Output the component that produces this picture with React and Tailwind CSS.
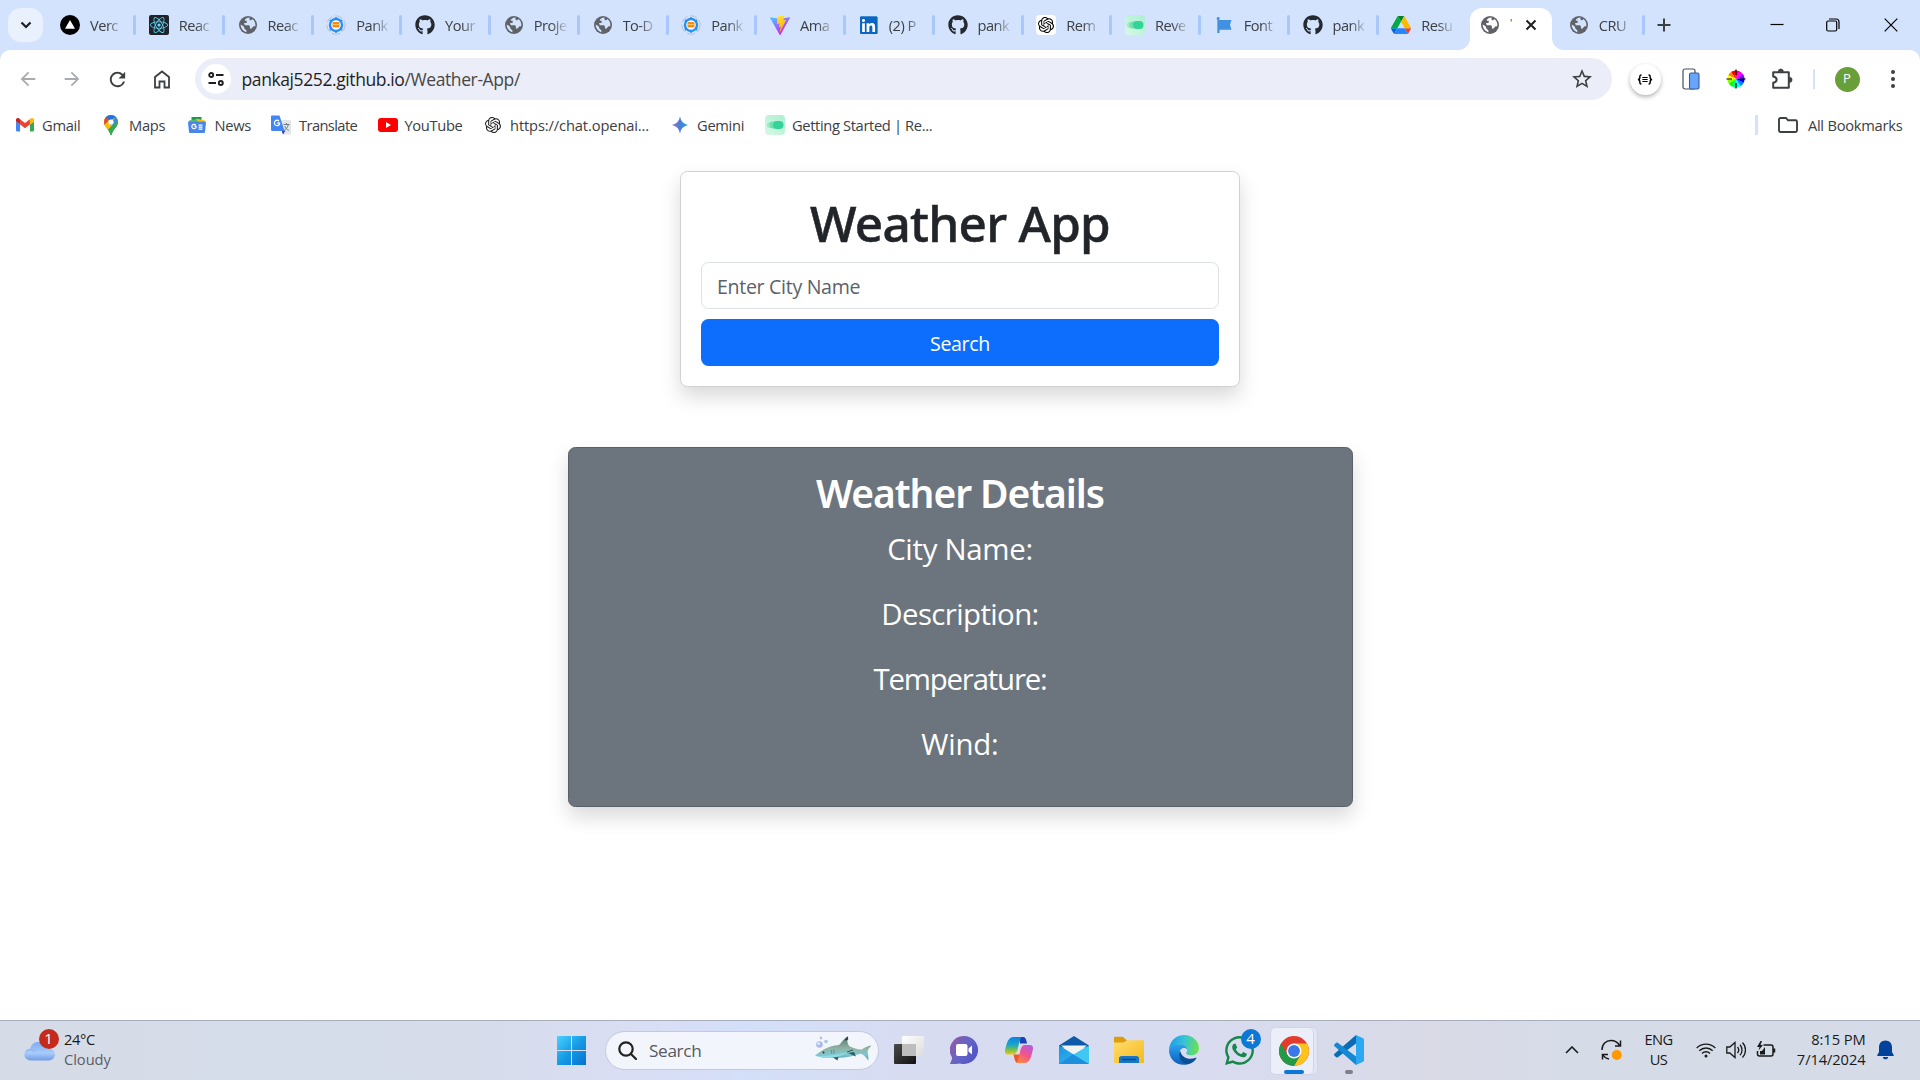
import { FaGithub, FaLinkedin, FaWhatsapp, FaReact } from "react-icons/fa";
import { SiOpenai } from "react-icons/si";
import { MdArrowBack, MdArrowForward, MdRefresh, MdStarOutline } from "react-icons/md";

/* ---------- favicons ---------- */

const Globe = ({ hole = "#d3e3fd" }) => (
  <svg viewBox="0 0 20 20" className="size-5">
    <circle cx="10" cy="10" r="9" fill="#5f6368" />
    <path fill={hole} d="M11.2 2.6c-1.8 0-3 .9-4.2 1.9-.6.6-.2 1.3.5 1.3h1.2v1.4c0 .6-.5.9-1 .9H6.6c-.5 0-.6.5-.4.9l.7 1.3h3.4c1 0 1.6.7 1.6 1.5v1.1c0 .5.4.8.9.8.8 0 1.3-.6 1.6-1.2.3-.7.9-1.3 1.7-1.3h1.2c.4-2.6-.6-5.2-2.5-6.9-1 .1-1.5.9-2 .9-.9 0-1.3-.7-1.3-1.3 0-.5.2-.9-.3-1.3zM2.7 9.6c-.1 3.6 2.3 6.8 5.7 7.6v-1.5c0-.7-.5-1.1-1-1.3-.8-.4-1.3-.9-1.3-1.8 0-.6-.2-1-.6-1.4z" />
  </svg>
);

const Vercel = () => (
  <svg viewBox="0 0 20 20" className="size-5">
    <circle cx="10" cy="10" r="10" fill="#000" />
    <path d="M10 5l5 8.800H5z" fill="#fff" />
  </svg>
);

const ReactTile = () => (
  <span className="flex size-5 items-center justify-center rounded-xs bg-[#20232a]">
    <FaReact className="size-[18px] text-[#61dafb]" />
  </span>
);

const Gear = () => (
  <svg viewBox="0 0 20 20" className="size-5">
    <circle cx="10" cy="10" r="9.200" fill="none" stroke="#b9bfd6" strokeWidth="1" strokeDasharray="8 2.500" />
    <circle cx="10" cy="10" r="6" fill="#fff" stroke="#2490f5" strokeWidth="2.400" />
    <path d="M10 2.300v2M10 15.700v2M4 5l1.300 1.300M14.700 13.700L16 15M4 15l1.300-1.300M14.700 6.300L16 5" stroke="#2490f5" strokeWidth="1.800" />
    <rect x="6.500" y="7" width="7" height="5.500" rx="1" fill="#f08c1d" />
    <path d="M7 9.500h6" stroke="#ffc04d" strokeWidth="1" />
  </svg>
);

const Vite = () => (
  <svg viewBox="0 0 256 257" className="size-5">
    <defs>
      <linearGradient id="viteA" x1="0" x2=".58" y1="0" y2=".8">
        <stop stopColor="#41d1ff" />
        <stop offset="1" stopColor="#bd34fe" />
      </linearGradient>
      <linearGradient id="viteB" x1=".4" x2=".5" y1="0" y2="1">
        <stop stopColor="#ffea83" />
        <stop offset=".1" stopColor="#ffdd35" />
        <stop offset="1" stopColor="#ffa800" />
      </linearGradient>
    </defs>
    <path fill="url(#viteA)" d="M255.153 37.938L134.897 252.976c-2.483 4.440-8.862 4.466-11.382.048L.875 37.958c-2.746-4.814 1.371-10.646 6.827-9.670l120.385 21.517a6.537 6.537 0 0 0 2.322-.004l117.867-21.483c5.438-.991 9.574 4.796 6.877 9.620Z" />
    <path fill="url(#viteB)" d="M185.432.063L96.440 17.501a3.268 3.268 0 0 0-2.634 3.014l-5.474 92.456a3.268 3.268 0 0 0 3.997 3.378l24.777-5.718c2.318-.535 4.413 1.507 3.936 3.838l-7.361 36.047c-.495 2.426 1.782 4.500 4.151 3.780l15.304-4.649c2.372-.720 4.652 1.360 4.150 3.788l-11.698 56.621c-.732 3.542 3.979 5.473 5.943 2.437l1.313-2.028l72.516-144.720c1.215-2.423-.880-5.186-3.540-4.672l-25.505 4.922c-2.396.462-4.435-1.770-3.759-4.114l16.646-57.705c.677-2.350-1.370-4.583-3.769-4.113Z" />
  </svg>
);

const Github = () => <FaGithub className="size-5 text-[#24292f]" />;
const Linkedin = () => (
  <span className="flex size-5 items-center justify-center">
    <span className="flex size-[18px] items-center justify-center overflow-hidden rounded-[1px] bg-white">
      <FaLinkedin className="size-[21px] shrink-0 text-[#0a66c2]" />
    </span>
  </span>
);
const OpenAiTile = () => (
  <span className="flex size-5 items-center justify-center rounded bg-white">
    <SiOpenai className="size-4 text-black" />
  </span>
);
const Toggle = () => (
  <svg viewBox="0 0 20 20" className="size-5">
    <defs>
      <linearGradient id="mint" x1="0" x2="1" y1="1" y2="0">
        <stop stopColor="#d9f8e8" />
        <stop offset="1" stopColor="#a9f0cd" />
      </linearGradient>
    </defs>
    <rect width="20" height="20" rx="4" fill="url(#mint)" />
    <rect x="2" y="7" width="12" height="6" rx="3" fill="#9aebc6" />
    <rect x="4.500" y="6.500" width="11" height="7" rx="3.500" fill="#6fe0ad" />
    <rect x="8" y="6" width="10.500" height="8" rx="4" fill="#34d399" />
  </svg>
);
const Flag = () => (
  <svg viewBox="0 0 20 20" className="size-5">
    <path d="M4.500 5H17.500L16 9.800l1.500 5H5.500V18H4V5z" fill="#4191e3" />
    <path d="M4.200 4v14" stroke="#4191e3" strokeWidth="1.800" />
    <circle cx="4.200" cy="3.300" r="1.400" fill="#4191e3" />
  </svg>
);
const Drive = () => (
  <svg viewBox="0 0 87.300 78" className="size-5">
    <path fill="#0066da" d="m6.600 66.850 3.850 6.650c.8 1.400 1.950 2.500 3.300 3.300l13.750-23.800h-27.500c0 1.550.4 3.100 1.200 4.500z" />
    <path fill="#00ac47" d="m43.650 25-13.750-23.800c-1.350.8-2.500 1.900-3.300 3.300l-25.400 44a9.060 9.060 0 0 0-1.200 4.500h27.500z" />
    <path fill="#ea4335" d="m73.550 76.800c1.350-.8 2.500-1.900 3.300-3.300l1.600-2.750 7.650-13.250c.8-1.400 1.200-2.950 1.200-4.500h-27.502l5.852 11.500z" />
    <path fill="#00832d" d="m43.650 25 13.750-23.800c-1.350-.8-2.900-1.200-4.500-1.200h-18.500c-1.600 0-3.150.45-4.500 1.200z" />
    <path fill="#2684fc" d="m59.800 53h-32.300l-13.750 23.800c1.350.8 2.900 1.200 4.500 1.200h50.800c1.600 0 3.150-.45 4.500-1.200z" />
    <path fill="#ffba00" d="m73.400 26.500-12.700-22c-.8-1.400-1.950-2.500-3.300-3.300l-13.750 23.800 16.150 28h27.450c0-1.550-.4-3.100-1.200-4.500z" />
  </svg>
);

/* ---------- tab strip ---------- */

const tabs = [
  { title: "Verc", Icon: Vercel },
  { title: "Reac", Icon: ReactTile },
  { title: "Reac", Icon: Globe },
  { title: "Pank", Icon: Gear },
  { title: "Your", Icon: Github },
  { title: "Proje", Icon: Globe },
  { title: "To-D", Icon: Globe },
  { title: "Pank", Icon: Gear },
  { title: "Ama", Icon: Vite },
  { title: "(2) P", Icon: Linkedin },
  { title: "pank", Icon: Github },
  { title: "Rem", Icon: OpenAiTile },
  { title: "Reve", Icon: Toggle },
  { title: "Font", Icon: Flag },
  { title: "pank", Icon: Github },
  { title: "Resu", Icon: Drive, noSep: true },
  { active: true },
  { title: "CRU", Icon: Globe },
];

const fade = "[mask-image:linear-gradient(to_right,#000_17px,rgba(0,0,0,0.15)_32px)]";

function Tab({ title, Icon, noSep }) {
  return (
    <div className="flex h-full w-[88.750px] shrink-0 items-center pl-[13.500px]">
      <span className="flex size-5 shrink-0 items-center justify-center"><Icon /></span>
      <span className="ml-2.5 flex w-[31px] shrink-0 pt-px">
        <span className={`whitespace-nowrap pr-1 text-[14.600px] tracking-[-0.500px] text-[#3c4043] ${fade}`}>{title}</span>
      </span>
      {!noSep && <span className="ml-[12px] h-5 w-[3px] shrink-0 rounded-full bg-[#a8c7fa]" />}
    </div>
  );
}

function ActiveTab() {
  return (
    <div className="flex h-full w-[88.750px] shrink-0 items-end">
      <svg viewBox="0 0 12 12" className="-ml-[8.500px] size-3 shrink-0"><path d="M12 0v12H0A12 12 0 0 0 12 0z" fill="#fff" /></svg>
      <div className="flex h-[42.500px] w-[82px] shrink-0 items-center rounded-t-xl bg-white pb-[7.500px] pl-2.5">
        <Globe hole="#fff" />
        <span className="ml-2.5 w-1 pb-1 text-[11px] leading-3 text-[#3c4043]">'</span>
        <svg viewBox="0 0 12 12" className="ml-[11px] size-3"><path d="M1.500 1.500l9 9M10.500 1.500l-9 9" stroke="#1f1f1f" strokeWidth="2" /></svg>
      </div>
      <svg viewBox="0 0 12 12" className="size-3 shrink-0"><path d="M0 0v12h12A12 12 0 0 1 0 0z" fill="#fff" /></svg>
    </div>
  );
}

function TabStrip() {
  return (
    <div className="flex h-[50px] items-center bg-[#d3e3fd]">
      <div className="ml-2 flex h-[34px] w-[35px] items-center justify-center rounded-[13px] bg-[#e9f1fe]">
        <svg viewBox="0 0 12 8" className="h-2 w-3"><path d="M1.500 1.500L6 6l4.500-4.500" fill="none" stroke="#1f1f1f" strokeWidth="2.200" /></svg>
      </div>
      <div className="ml-[3.500px] flex h-full items-center">
        {tabs.map((t, i) => (t.active ? <ActiveTab key={i} /> : <Tab key={i} {...t} />))}
      </div>
      <svg viewBox="0 0 14 14" className="ml-[12.500px] size-3.5"><path d="M7 .5v13M.5 7h13" stroke="#3c4043" strokeWidth="2" /></svg>
      <div className="ml-auto flex items-center pr-[22px]">
        <svg viewBox="0 0 14 14" className="size-3.5"><path d="M.5 6.500h13" stroke="#000" strokeWidth="1.200" /></svg>
        <svg viewBox="0 0 14 14" className="ml-[42px] size-3.5" fill="none" stroke="#000" strokeWidth="1.200"><rect x=".7" y="3" width="10" height="10" rx="1.500" /><path d="M3 1h7a3 3 0 0 1 3 3v7" /></svg>
        <svg viewBox="0 0 14 14" className="ml-11 size-3.5"><path d="M.7.7l12.600 12.600M13.300.7L.7 13.300" stroke="#000" strokeWidth="1.200" /></svg>
      </div>
    </div>
  );
}

/* ---------- toolbar ---------- */

const Slot = ({ w, children }) => <span className={`flex shrink-0 items-center justify-center ${w}`}>{children}</span>;

const wheel = ["#f0f", "#f08", "#f00", "#f80", "#ff0", "#8f0", "#0f0", "#0f8", "#0ff", "#08f", "#00f", "#80f"];

function ColorWheel() {
  const n = wheel.length;
  return (
    <svg viewBox="0 0 20 20" className="size-5">
      {wheel.map((c, i) => {
        const a = -((i * 2 * Math.PI) / n) - 0.6;
        const b = a - (2 * Math.PI) / n - 0.03;
        return <path key={c} fill={c} d={`M10 10L${10 + 8.6 * Math.cos(a)} ${10 + 8.6 * Math.sin(a)}A8.600 8.600 0 0 0 ${10 + 8.6 * Math.cos(b)} ${10 + 8.6 * Math.sin(b)}z`} />;
      })}
      <path d="M10 .5V6M10 14v5.500M.5 10H6M14 10h5.500" stroke="#000" strokeWidth="1.200" />
    </svg>
  );
}

function Toolbar() {
  return (
    <div className="flex h-[58px] items-center rounded-t-[10px] bg-white pl-[5.500px]">
      <Slot w="w-[44px]"><MdArrowBack className="size-[22px] text-[#a9abae]" /></Slot>
      <Slot w="w-[45px]"><MdArrowForward className="size-[22px] text-[#a9abae]" /></Slot>
      <Slot w="w-[45px]"><MdRefresh className="size-[23px] text-[#3c4043]" /></Slot>
      <Slot w="w-[45px]">
        <svg viewBox="0 0 16 19" className="h-[19px] w-4" fill="none" stroke="#3c4043" strokeWidth="1.800"><path d="M1 17.500V7l7-5.500L15 7v10.500h-4.500V11.500h-5v6z" /></svg>
      </Slot>
      <div className="ml-[10.500px] flex h-[42px] w-[1417px] shrink-0 items-center rounded-full bg-[#ebeef8] pl-1.5">
        <span className="flex size-[30px] items-center justify-center rounded-full bg-white">
          <svg viewBox="0 0 16 14" className="h-3.5 w-4" fill="none" stroke="#1f1f1f" strokeWidth="1.900"><circle cx="3.200" cy="3" r="2" /><path d="M8 3h7.500M.5 11H8" /><circle cx="12.800" cy="11" r="2" /></svg>
        </span>
        <span className="ml-[10.500px] whitespace-nowrap pt-px text-[17.500px] tracking-[-0.400px] text-[#1f1f1f]">
          pankaj5252.github.io<span className="text-[#474747]">/Weather-App/</span>
        </span>
        <MdStarOutline className="ml-auto mr-[18px] size-6 text-[#3c4043]" />
      </div>
      <div className="flex items-center pl-[17.500px]">
        <span className="flex size-[31px] items-center justify-center rounded-full bg-white shadow-[0_2px_4px_rgba(0,0,0,0.3)]">
          <svg viewBox="0 0 18 12" className="h-[11px] w-4" fill="none" stroke="#000" strokeWidth="1.600"><path d="M5 1C3 1 3.200 2 3.200 3.500S2.800 6 1 6c1.800 0 2.200 1 2.200 2.500S3 11 5 11M13 1c2 0 1.800 1 1.800 2.500S15.200 6 17 6c-1.800 0-2.200 1-2.200 2.500S15 11 13 11" /><path d="M6 3.700h6M6 6h6M6 8.300h6" strokeWidth="1.200" /></svg>
        </span>
        <Slot w="w-[60px]">
          <svg viewBox="0 0 18 22" className="h-[22px] w-[18px]"><rect x="1" y="1" width="12" height="20" rx="2" fill="#fff" stroke="#444c63" strokeWidth="1.200" /><rect x="7.500" y="5" width="9.500" height="16" rx="1.500" fill="#66a5fb" stroke="#3c5a92" strokeWidth="1.100" /></svg>
        </Slot>
        <Slot w="w-[30px]"><ColorWheel /></Slot>
        <Slot w="w-[62px]">
          <svg viewBox="0 0 22 22" className="size-[22px]"><path d="M2.200 4.200H17.800V19.800H2.200V14.800C6.800 13.600 6.800 9.600 2.200 8.600z" fill="none" stroke="#3c4043" strokeWidth="2" strokeLinejoin="round" /><path d="M7.200 3.500a2.600 2.600 0 0 1 5.200 0zM18.500 9.200a2.600 2.600 0 0 1 0 5.200z" fill="#3c4043" stroke="#3c4043" strokeWidth=".6" /></svg>
        </Slot>
        <span className="h-5 w-0.5 bg-[#d3e3fd]" />
        <span className="ml-5 flex size-[25px] items-center justify-center rounded-full bg-[#689f38] text-[13px] text-white">P</span>
        <svg viewBox="0 0 6 20" className="ml-[30px] h-5 w-1.5" fill="#3c4043"><circle cx="3" cy="3" r="2" /><circle cx="3" cy="10" r="2" /><circle cx="3" cy="17" r="2" /></svg>
      </div>
    </div>
  );
}

/* ---------- bookmarks ---------- */

const Gmail = () => (
  <svg viewBox="52 42 88 66" className="w-[18px]">
    <path fill="#4285f4" d="M58 108h14V74L52 59v43c0 3.320 2.690 6 6 6" />
    <path fill="#34a853" d="M120 108h14c3.320 0 6-2.690 6-6V59l-20 15" />
    <path fill="#fbbc04" d="M120 48v26l20-15v-8c0-7.420-8.470-11.650-14.400-7.200" />
    <path fill="#ea4335" d="M72 74V48l24 18 24-18v26L96 92" />
    <path fill="#c5221f" d="M52 51v8l20 15V48l-5.600-4.200c-5.940-4.450-14.400-.220-14.400 7.200" />
  </svg>
);
const Maps = () => (
  <svg viewBox="0 0 14 20" className="h-5 w-3.5">
    <defs><clipPath id="pin"><path d="M7 0a7 7 0 0 1 7 7c0 3-1.800 4.800-3.600 7.200C9 16 8.300 17.600 7.800 19.200c-.3 1-1.300 1-1.600 0C5.700 17.600 5 16 3.600 14.200 1.800 11.800 0 10 0 7a7 7 0 0 1 7-7z" /></clipPath></defs>
    <g clipPath="url(#pin)">
      <path d="M0 0h14v20H0z" fill="#34a853" />
      <path d="M0 14.500L14 0H0z" fill="#fbbc04" />
      <path d="M0 10.500L5 4.800 1.600 1.600 0 3z" fill="#ea4335" />
      <path d="M1.500 2l4 3.400L12.500 2V0h-11z" fill="#1a73e8" />
      <path d="M6 9L12.500 1.500 14 4v4L7 12z" fill="#4285f4" opacity=".9" />
      <path d="M14 5.500v14.500H3.500v-6z" fill="#34a853" />
      <path d="M0 10l4-3 2 2.500 2.500.5L3.600 15z" fill="#fbbc04" />
    </g>
    <circle cx="7" cy="7" r="2.600" fill="#fff" />
  </svg>
);
const News = () => (
  <svg viewBox="0 0 18 16" className="h-4 w-[18px]">
    <path d="M3.500 0h10v5h-10z" fill="#0c9d58" />
    <path d="M8 1.500l9 2-1 5H7z" fill="#ffc107" />
    <path d="M1 3.500l8-1.500 1 4H1.500z" fill="#5bb974" />
    <path d="M0 5.500C0 4.900.5 4.500 1 4.500h16c.6 0 1 .5 1 1L17 15c-.1.600-.5 1-1 1H2c-.5 0-.9-.4-1-1z" fill="#4a86e8" />
    <path d="M8.200 9.200H6.400M8.200 9.200A2.200 2.200 0 1 1 7.600 8M10.500 8.200h4M10.500 10.200h4M10.500 12.200h4" stroke="#fff" strokeWidth="1.200" fill="none" />
  </svg>
);
const Translate = () => (
  <svg viewBox="0 0 20 20" className="size-5">
    <path d="M8 5h10.500c.8 0 1.500.7 1.500 1.500V18c0 .8-.7 1.500-1.500 1.500H12z" fill="#e4e5e7" />
    <path d="M10.500 15.500h4L12 19.500z" fill="#3a3ab8" />
    <path d="M1.200.5H8.500l5 15.500H1.200C.5 16 0 15.500 0 14.800V1.700C0 1 .5.500 1.200.5z" fill="#4285f4" />
    <path d="M8.800 8H6.300M8.800 8.100A2.700 2.700 0 1 1 8 6" stroke="#fff" strokeWidth="1.300" fill="none" />
    <path d="M12.500 9.500h6M15.500 8v1.500M17.300 9.500c-.4 2.500-2 4.500-4 5.700M13.800 11c.7 2 2 3.500 4 4.500" stroke="#6a7b8c" strokeWidth="1" fill="none" />
  </svg>
);
const Youtube = () => (
  <svg viewBox="0 0 20 14" className="h-3.5 w-5"><rect width="20" height="14" rx="3" fill="#f00" /><path d="M8 4l5 3-5 3z" fill="#fff" /></svg>
);
const Gemini = () => (
  <svg viewBox="0 0 18 18" className="size-[18px]">
    <defs><linearGradient id="gem" x1="0" x2="1"><stop stopColor="#a06cc9" /><stop offset=".5" stopColor="#4a7fd4" /><stop offset="1" stopColor="#1ba1e3" /></linearGradient></defs>
    <path d="M9 0c.6 5 3.800 8.400 9 9-5.200.6-8.400 4-9 9-.6-5-3.800-8.400-9-9 5.200-.6 8.400-4 9-9z" fill="url(#gem)" />
  </svg>
);

const bookmarks = [
  { label: "Gmail", Icon: Gmail, box: "w-[86px]", text: "ml-[7px] tracking-[-0.300px]" },
  { label: "Maps", Icon: Maps, box: "w-[85.500px]", text: "ml-[8px] tracking-[-0.300px]" },
  { label: "News", Icon: News, box: "w-[84.500px]", text: "ml-[8px] tracking-[-0.300px]" },
  { label: "Translate", Icon: Translate, box: "w-[106.500px]", text: "ml-[8px] tracking-[-0.600px]" },
  { label: "YouTube", Icon: Youtube, box: "w-[105.500px]", text: "ml-[7px] tracking-[-0.350px]" },
  { label: "https://chat.openai...", Icon: () => <SiOpenai className="size-4 text-[#1f1f1f]" />, box: "w-[186.500px]", text: "ml-[7px] tracking-[-0.130px]" },
  { label: "Gemini", Icon: Gemini, box: "w-[95.500px]", text: "ml-[7.500px] tracking-[-0.300px]" },
  { label: "Getting Started | Re...", Icon: Toggle, box: "w-[180px]", text: "ml-[7px] tracking-[-0.360px]" },
];

function BookmarksBar() {
  return (
    <div className="flex h-[38px] items-center bg-white pb-1 pl-[15px] text-[14.700px] text-[#3c4043]">
      {bookmarks.map(({ label, Icon, box, text }) => (
        <div key={label} className={`flex shrink-0 items-center whitespace-nowrap ${box}`}>
          <span className="flex w-5 shrink-0 items-center justify-center"><Icon /></span>
          <span className={text}>{label}</span>
        </div>
      ))}
      <div className="ml-auto flex items-center pr-[17.500px]">
        <span className="h-5 w-[3px] bg-[#d3e3fd]" />
        <svg viewBox="0 0 20 16" className="ml-5 h-4 w-5"><path d="M1 2.500C1 1.700 1.700 1 2.500 1H8l2 2.300h7.500c.8 0 1.500.7 1.500 1.500v8.700c0 .8-.7 1.500-1.500 1.500h-15C1.700 15 1 14.300 1 13.500z" fill="none" stroke="#3c4043" strokeWidth="1.900" /></svg>
        <span className="ml-2.5 whitespace-nowrap tracking-[-0.250px]">All Bookmarks</span>
      </div>
    </div>
  );
}

/* ---------- page ---------- */

function WeatherPage() {
  return (
    <main className="flex flex-1 flex-col items-center bg-white pt-[25px]">
      <section className="h-[216px] w-[560px] rounded-[7.500px] border border-[#d0d1d2] bg-white px-5 pt-[21px] shadow-[0_10px_20px_rgba(0,0,0,0.15)]">
        <h1 className="text-center font-['Noto_Sans',sans-serif] text-[49.500px] font-medium leading-[60px] tracking-[-0.750px] text-[#212529] [-webkit-text-stroke:0.5px_#212529]">Weather App</h1>
        <input
          placeholder="Enter City Name"
          className="mt-[9px] block h-[47px] w-full rounded-[7.500px] border border-[#dee2e6] px-[15px] pt-0.5 text-[19.600px] tracking-[-0.320px] placeholder:text-[#5c6268]"
        />
        <button className="mt-2.5 block h-[47px] w-full rounded-[7.500px] bg-[#0d6efd] pt-px text-[19.600px] leading-[47px] tracking-[-0.350px] text-white">Search</button>
      </section>
      <section className="mt-[60px] h-[360px] w-[785px] rounded-[7.500px] border border-[#596067] bg-[#6c757d] px-5 pt-[21px] text-center text-white shadow-[0_10px_20px_rgba(0,0,0,0.15)]">
        <h3 className="font-['Noto_Sans',sans-serif] text-[39px] font-semibold leading-[48px] tracking-[-1.070px]">Weather Details</h3>
        <p className="mt-[9px] h-[65px] text-[29.400px] leading-[46px] tracking-[-0.300px]">City Name:</p>
        <p className="h-[65px] text-[29.400px] leading-[46px] tracking-[-0.600px]">Description:</p>
        <p className="h-[65px] text-[29.400px] leading-[46px] tracking-[-1.200px]">Temperature:</p>
        <p className="h-[65px] text-[29.400px] leading-[46px] tracking-[-0.200px]">Wind:</p>
      </section>
    </main>
  );
}

/* ---------- taskbar ---------- */

const Windows = () => (
  <svg viewBox="0 0 29 29" className="size-[29px]">
    <defs><linearGradient id="win" x1="0" x2="1" y1="0" y2="1" gradientUnits="objectBoundingBox"><stop stopColor="#4cd0ff" /><stop offset=".5" stopColor="#169be6" /><stop offset="1" stopColor="#0670d0" /></linearGradient></defs>
    <path fill="url(#win)" d="M0 0h14v14H0zM15 0h14v14H15zM0 15h14v14H0zM15 15h14v14H15z" />
  </svg>
);

const Shark = () => (
  <svg viewBox="0 0 58 25" className="h-[25px] w-[58px]">
    <defs><linearGradient id="shark" x2="0" y2="1"><stop stopColor="#55756e" /><stop offset=".5" stopColor="#8fb3a4" /><stop offset=".75" stopColor="#7fc8cf" /><stop offset="1" stopColor="#4d9aa6" /></linearGradient></defs>
    <path d="M1 19.500C7 14.500 14 10 25 9c2.500-2.500 5-6.500 8.500-8.500-.8 3.500-.3 6 1.500 9.500 5 2.500 9 3.600 13 3.400C50.500 11.500 53.500 10 57.500 9.500c-2.300 2.300-3.500 4-4 6 .8 3 1 6 .8 9-2.300-3.800-5-6-7.800-6.800-6 1.800-12 3.300-17 3.800C19 22.500 8 22 1 19.500z" fill="url(#shark)" />
    <path d="M2 20c10 0 20-1 32-4-6 4-14 6-20 6-5 0-9-.8-12-2z" fill="#8fdbe6" />
    <path d="M19 21.500l4.500 3 1-3.500zM34 17l8 3.500-2-4.500z" fill="#2d5c66" />
    <path d="M31.500 4L33.500.8l.2 3zM33 16l6-2" stroke="#263c3c" strokeWidth=".8" fill="#263c3c" />
    <circle cx="9.500" cy="16.500" r="1" fill="#4b2222" />
    <path d="M17 14l1 4M19.500 13.500l1 4" stroke="#58817c" strokeWidth=".8" />
    <circle cx="5.500" cy="8.500" r="3.300" fill="#a9b9ea" /><circle cx="4.600" cy="7.600" r="1.300" fill="#e4f3ff" />
    <circle cx="12" cy="5.500" r="1.800" fill="#a8c5ec" /><circle cx="7" cy="2" r="1.400" fill="#b9bff0" />
  </svg>
);

const TaskView = () => (
  <svg viewBox="0 0 30 28" className="h-7 w-[30px]">
    <defs><linearGradient id="tv" x1="0" x2="1" y1="0" y2="1"><stop stopColor="#4a4a4a" /><stop offset="1" stopColor="#111" /></linearGradient><linearGradient id="tvl" x2="1" y2="1"><stop stopColor="#fff" /><stop offset="1" stopColor="#dcdcdc" /></linearGradient></defs>
    <rect x="0" y="8" width="22" height="20" rx="1" fill="url(#tv)" />
    <rect x="8" y="0" width="22" height="20" rx="1" fill="url(#tvl)" />
    <path d="M8 8h14v12H8z" fill="#bdbdbd" />
  </svg>
);

const Chat = () => (
  <svg viewBox="0 0 28 28" className="size-7">
    <defs><linearGradient id="chat" x1="0" x2="1" y1=".2" y2=".8"><stop stopColor="#8f5ba8" /><stop offset=".5" stopColor="#6264c7" /><stop offset="1" stopColor="#4f52c4" /></linearGradient></defs>
    <path d="M14 0a14 14 0 1 1-4 27.400C8 28 4 28 .5 28c-.5 0-.6-.5-.3-.9.9-1.300 1.600-2.800 1.900-5.500A14 14 0 0 1 14 0z" fill="url(#chat)" />
    <rect x="6" y="8" width="11.500" height="12" rx="2" fill="#fff" /><path d="M18.500 12.500L22 9.500v9l-3.500-3z" fill="#fff" />
  </svg>
);

const Copilot = () => (
  <svg viewBox="0 0 28 26" className="h-[26px] w-7">
    <defs>
      <linearGradient id="cpA" x2="0" y2="1"><stop stopColor="#0f7fe0" /><stop offset=".45" stopColor="#18a8c9" /><stop offset=".75" stopColor="#7cc243" /><stop offset="1" stopColor="#f3c614" /></linearGradient>
      <linearGradient id="cpB" x1=".8" x2=".2" y2="1"><stop stopColor="#b65be0" /><stop offset=".5" stopColor="#f0558c" /><stop offset="1" stopColor="#ff8a3c" /></linearGradient>
    </defs>
    <path d="M14 0h4.500c2 0 2.800 3 3.500 6.500h-7z" fill="#1b41b8" />
    <path d="M8.500 0H17c-2 1-2.500 4-3.500 8.500-1 5-2 9-5 9H3c-2.500 0-3.500-2-2.800-5C1.500 7 3 0 8.500 0z" fill="url(#cpA)" />
    <path d="M8.500 17.500H15l-1.500 8.300C10 26.300 9.500 22 8.500 17.500z" fill="#f0562c" />
    <path d="M19.500 26H11c2-1 2.500-4 3.500-8.500 1-5 2-9.500 5-9.500H25c2.500 0 3.500 2 2.800 5C26.500 19 25 26 19.500 26z" fill="url(#cpB)" />
  </svg>
);

const Mail = () => (
  <svg viewBox="0 0 30 28" className="h-7 w-[30px]">
    <defs><linearGradient id="mail" x2="1" y2="1"><stop stopColor="#1c93e0" /><stop offset=".5" stopColor="#2aa9ea" /><stop offset="1" stopColor="#1583d6" /></linearGradient></defs>
    <path d="M0 9.500L15 0l15 9.500-1 2H1z" fill="#0d5ba8" />
    <path d="M2 9.500h26L15 19z" fill="#f2f2f2" />
    <path d="M0 9.500L30 28H0z" fill="url(#mail)" />
    <path d="M30 9.500v18.500L14.500 18.500z" fill="#3fc8f2" />
    <path d="M30 28L14 18.300 0 28z" fill="#1d8fdd" />
  </svg>
);

const Folder = () => (
  <svg viewBox="0 0 30 28" className="h-7 w-[30px]">
    <defs><linearGradient id="fold" x2="1" y2="1"><stop stopColor="#ffdd6e" /><stop offset="1" stopColor="#f6b91c" /></linearGradient></defs>
    <path d="M0 2c0-.7.5-1.200 1.200-1.200h7.600L13 4.500V12H0z" fill="#dc9c10" />
    <path d="M0 6.500h9.500L13 4.300h16c.6 0 1 .4 1 1V26c0 .6-.4 1-1 1H1c-.6 0-1-.4-1-1z" fill="url(#fold)" />
    <path d="M5 27v-4.500C5 21 6 20 7.500 20h15c1.500 0 2.500 1 2.500 2.500V27z" fill="#1677c7" />
    <path d="M8.500 23.500h13" stroke="#0b4a86" strokeWidth="1.300" strokeLinecap="round" />
  </svg>
);

const Edge = () => (
  <svg viewBox="0 0 30 30" className="size-[30px]">
    <defs>
      <linearGradient id="edA" x1="0" x2="1" y1=".3" y2=".4"><stop stopColor="#1d9bea" /><stop offset=".5" stopColor="#35c4d8" /><stop offset="1" stopColor="#6ee04f" /></linearGradient>
      <linearGradient id="edB" x2="0" y2="1"><stop stopColor="#2aa3ec" /><stop offset="1" stopColor="#0d5fbe" /></linearGradient>
    </defs>
    <path d="M0 15C.5 5.500 7.500 0 15 0c8.500 0 15 6 15 13 0 4.500-3.500 7.300-7.500 7.300-3.500 0-5.300-1.200-5.300-2.400 0-.9 1.200-1.300 1.200-3.400C18.400 12 15.500 9.500 11 9.500 6 9.500 2 12 0 15z" fill="url(#edA)" />
    <path d="M0 15C2 11.300 5.500 9.300 10.500 9.300c5 0 7.900 2.700 7.900 5.500-1.300-2.200-5-2.600-7 .2C9 18.500 10 26 18 29.500 8.500 31.500 0 25 0 15z" fill="url(#edB)" />
    <path d="M11 15.500C8.500 20.500 11 28 18 29.600c4-.8 7.300-3 9.300-6.200.3-.5-.1-.9-.6-.7-6.200 2.700-13.700.8-15.700-7.200z" fill="#0c4f99" />
  </svg>
);

const Chrome = () => (
  <svg viewBox="0 0 48 48" className="size-[30px]">
    <circle cx="24" cy="24" r="24" fill="#e33b2e" />
    <path d="M34.390 30L24 48A24 24 0 0 0 44.780 12H24z" fill="#fcc31e" />
    <path d="M13.610 30L3.220 12A24 24 0 0 0 24 48l10.390-18z" fill="#229a48" />
    <circle cx="24" cy="24" r="12" fill="#fff" /><circle cx="24" cy="24" r="9.500" fill="#3b78e7" />
  </svg>
);

const VsCode = () => (
  <svg viewBox="0 0 30 30" className="size-[30px]">
    <path d="M22 0v8.500L3.800 22.300c-.5.400-1 .4-1.500 0L.5 20.700c-.6-.5-.6-1.400 0-1.900z" fill="#0b6cb4" />
    <path d="M22 30v-8.500L3.800 7.700c-.5-.4-1-.4-1.500 0L.5 9.300c-.6.500-.6 1.400 0 1.900z" fill="#1289d4" />
    <path d="M22 0l7 3.200c.6.300 1 .8 1 1.500v20.600c0 .7-.4 1.200-1 1.500L22 30z" fill="#2aa8f2" />
  </svg>
);

const AppIcon = ({ children }) => <span className="flex h-full w-[55px] shrink-0 items-center justify-center pb-px">{children}</span>;

function Taskbar() {
  return (
    <footer className="flex h-[60px] items-center border-t border-[#a8aebd] bg-[linear-gradient(90deg,#d5dce8_0%,#d6dcea_24%,#d9def4_33%,#d3dff8_39%,#d8dcf1_48%,#d8dcf0_62%,#d9dae6_75%,#d5dce8_82%,#d5dce8_100%)]">
      <div className="flex w-[556.500px] items-center pb-1 pl-6">
        <span className="relative h-8 w-8">
          <svg viewBox="0 0 32 20" className="mt-2 h-5 w-8">
            <defs><linearGradient id="cloud" x2="0" y2="1"><stop stopColor="#7eaaf0" /><stop offset=".6" stopColor="#a9ccfa" /><stop offset="1" stopColor="#6f9be6" /></linearGradient></defs>
            <path d="M6.500 19.500a6 6 0 0 1-.3-12C7.500 3 10.500 1 14.500 1c4.500 0 7.600 2.500 8.500 6.500h2a6 6 0 0 1 0 12z" fill="url(#cloud)" />
            <path d="M2 10.500c2.500-2.500 6.500-2.500 9 0" stroke="#8db4f3" fill="none" />
          </svg>
          <span className="absolute -top-1 left-[14.500px] flex size-5 items-center justify-center rounded-full bg-[#c42b1c] text-[15px] text-white">1</span>
        </span>
        <div className="ml-2 text-[14.700px] leading-5 tracking-[-0.050px]">
          <div className="tracking-[-0.400px] text-[#1a1a1a]">24°C</div>
          <div className="text-[#5b5e66]">Cloudy</div>
        </div>
      </div>
      <Windows />
      <div className="ml-[19px] flex h-[39px] w-[274px] items-center rounded-full border border-[#c4c9de] bg-[#f2f5fc] pl-[12.500px]">
        <svg viewBox="0 0 19 19" className="size-[19px]" fill="none" stroke="#222" strokeWidth="2.200"><circle cx="8" cy="8" r="6.700" /><path d="M13 13l5 5" strokeLinecap="round" /></svg>
        <span className="ml-3 text-[17.200px] tracking-[-0.350px] text-[#56595f]">Search</span>
        <span className="ml-auto mr-1.5 pb-1"><Shark /></span>
      </div>
      <div className="flex h-full items-center pl-[3px]">
        <AppIcon><TaskView /></AppIcon>
        <AppIcon><Chat /></AppIcon>
        <AppIcon><Copilot /></AppIcon>
        <AppIcon><Mail /></AppIcon>
        <AppIcon><Folder /></AppIcon>
        <AppIcon><Edge /></AppIcon>
        <AppIcon>
          <span className="relative">
            <FaWhatsapp className="size-[33px] text-[#16874b]" />
            <span className="absolute -top-[5px] left-[18px] flex size-5 items-center justify-center rounded-full bg-[#0a78d4] text-[15px] text-white">4</span>
          </span>
        </AppIcon>
        <span className="flex h-full w-[55px] shrink-0 items-center justify-center">
          <span className="flex h-12 w-12 rounded-[5px] border border-[#d0d4e6] bg-[#e2e5f4]">
            <span className="flex h-full w-[43px] flex-col items-center rounded-[5px] border-r border-[#d0d4e6] bg-[#eceff9] pl-1 pt-2">
              <Chrome />
              <span className="mt-1 h-1 w-5 rounded-full bg-[#0a78d4]" />
            </span>
          </span>
        </span>
        <span className="flex h-full w-[55px] shrink-0 flex-col items-center pt-[14px]">
          <VsCode />
          <span className="mt-[5px] h-1 w-2 rounded-full bg-[#7d808a]" />
        </span>
      </div>
      <div className="ml-auto flex h-full items-center pb-0.5 text-[14.700px] leading-5 text-[#1a1a1a]">
        <svg viewBox="0 0 14 8" className="h-2 w-3.5"><path d="M1 7l6-6 6 6" fill="none" stroke="#1a1a1a" strokeWidth="1.600" /></svg>
        <svg viewBox="0 0 21 21" className="ml-[22px] size-[21px]" fill="none" stroke="#1a1a1a" strokeWidth="1.500"><path d="M1 11C1 5 5 1.500 10 1.500c4 0 7 2 9 5.500M19.500 1.500V7H14M8 20C5 19.500 3 18 1.800 15.500M1.500 20.500v-5H7" /><circle cx="15.800" cy="16" r="5" fill="#ff9800" stroke="none" /></svg>
        <div className="ml-[22px] w-[30px] pb-0.5 text-center tracking-[-0.600px]"><div>ENG</div><div>US</div></div>
        <svg viewBox="0 0 20 16" className="ml-[22px] h-4 w-5" fill="none" stroke="#1a1a1a" strokeWidth="1.400"><path d="M.7 6a13.200 13.200 0 0 1 18.600 0M3.300 8.800a9.500 9.500 0 0 1 13.400 0M6 11.500a5.600 5.600 0 0 1 8 0" /><circle cx="10" cy="14" r="1.500" fill="#1a1a1a" stroke="none" /></svg>
        <svg viewBox="0 0 20 18" className="ml-2.5 h-[18px] w-5" fill="none" stroke="#1a1a1a" strokeWidth="1.300"><path d="M.8 6h3L9 1.500v15L3.800 12h-3zM11.500 6c1.500 1.800 1.500 4.200 0 6M14 3.800c2.700 3 2.700 7.400 0 10.400M16.500 1.500c4 4.300 4 10.700 0 15" /></svg>
        <svg viewBox="0 0 20 17" className="ml-2.5 h-[17px] w-5" fill="none" stroke="#1a1a1a" strokeWidth="1.500"><path d="M7.500 4H15c1.200 0 2 .8 2 2v7c0 1.200-.8 2-2 2H3.500c-1.200 0-2-.8-2-2V10M18.500 7.500v4" /><path d="M4 13.500V10h2l3-4v7.500zM4.500 0L1 6h2.500L2.500 9.500 7 4H4.500L6 0z" fill="#1a1a1a" stroke="none" /></svg>
        <div className="ml-4 w-[74px] whitespace-nowrap pb-0.5 text-right tracking-[-0.100px]"><div>8:15 PM</div><div>7/14/2024</div></div>
        <svg viewBox="0 0 17 20" className="ml-[11px] mr-[26.500px] h-5 w-[17px]" fill="#00429c"><path d="M8.500.5c3.800 0 6.500 2.800 6.500 6.500V12l1.700 3c.2.500 0 1-.6 1H.9c-.6 0-.8-.5-.6-1L2 12V7C2 3.300 4.700.500 8.500.500zM5.800 17h5.400c-.3 1.400-1.300 2.300-2.700 2.300S6.100 18.400 5.800 17z" /></svg>
      </div>
    </footer>
  );
}

export default function App() {
  return (
    <div className="flex h-[1080px] w-[1920px] flex-col overflow-hidden bg-[#d3e3fd] font-['Open_Sans','Noto_Sans',sans-serif]">
      <TabStrip />
      <Toolbar />
      <BookmarksBar />
      <WeatherPage />
      <Taskbar />
    </div>
  );
}
